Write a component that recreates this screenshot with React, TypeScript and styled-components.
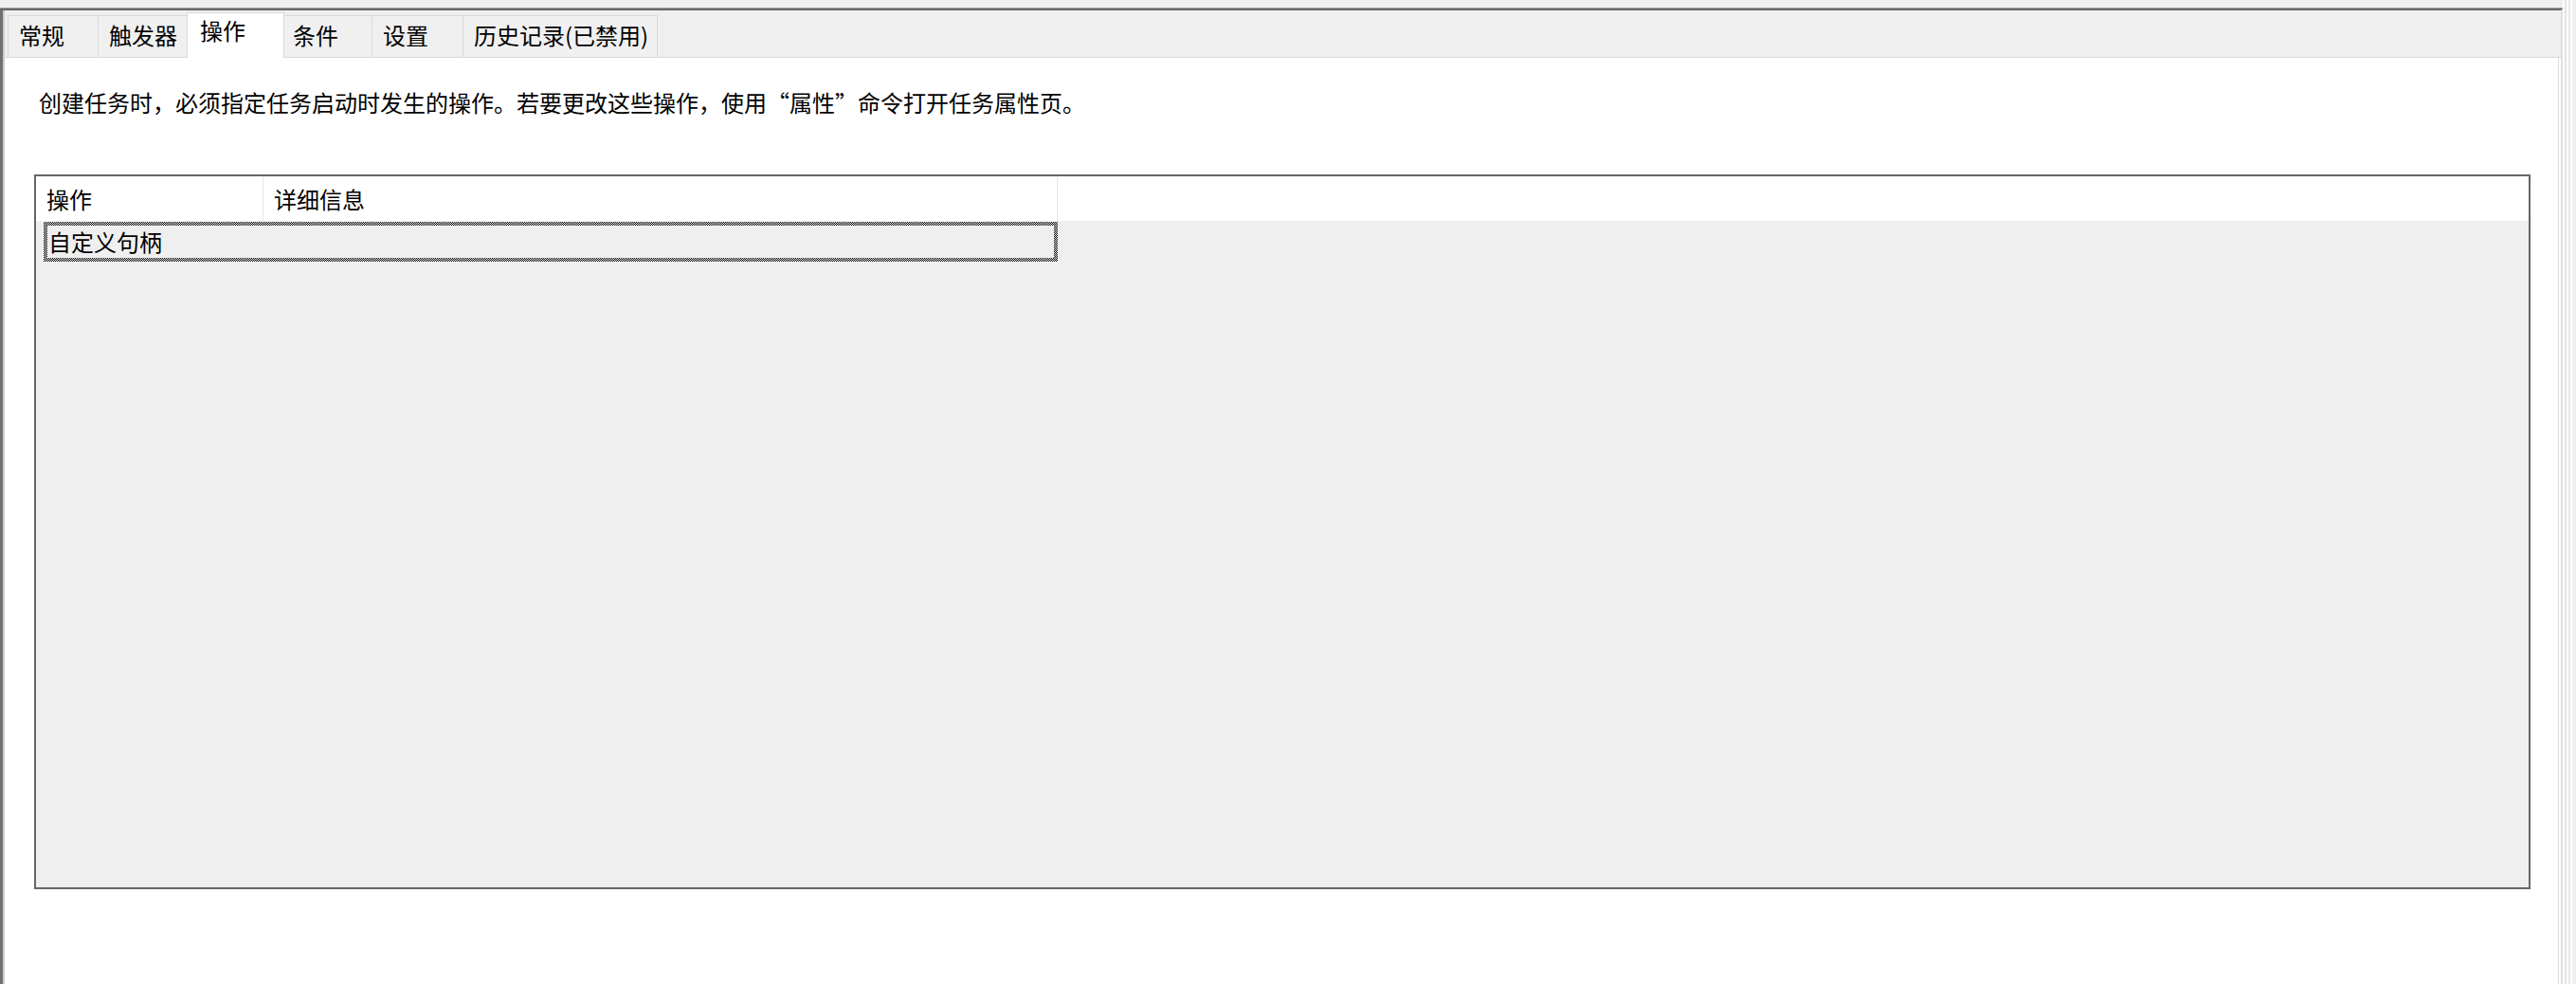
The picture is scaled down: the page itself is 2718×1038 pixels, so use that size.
import React from 'react';
import styled, { createGlobalStyle } from 'styled-components';

const tabs = [
    { label: '常规', width: 96 },
    { label: '触发器', width: 97 },
    { label: '操作', width: 99 },
    { label: '条件', width: 96 },
    { label: '设置', width: 97 },
    { label: '历史记录(已禁用)', width: 206 },
];

const activeTab = '操作';

const columns = [
    { label: '操作', width: 240 },
    { label: '详细信息', width: 838 },
];

export default function App() {
    return (
        <>
            <GlobalStyle />
            <Screen>
                <Window>
                    <Frame>
                        <TabStrip>
                            {tabs.map((t) => (
                                <Tab key={t.label} $width={t.width} $active={t.label === activeTab}>
                                    {t.label}
                                </Tab>
                            ))}
                        </TabStrip>

                        <Panel>
                            <Description>
                                创建任务时，必须指定任务启动时发生的操作。若要更改这些操作，使用“属性”命令打开任务属性页。
                            </Description>

                            <ActionTable>
                                <HeaderRow>
                                    {columns.map((c) => (
                                        <HeaderCell key={c.label} $width={c.width}>
                                            {c.label}
                                        </HeaderCell>
                                    ))}
                                </HeaderRow>
                                <FocusRow>
                                    <RowBody>自定义句柄</RowBody>
                                </FocusRow>
                            </ActionTable>
                        </Panel>
                    </Frame>
                </Window>
                <Stripes />
            </Screen>
        </>
    );
}

const GlobalStyle = createGlobalStyle`
    html, body {
        margin: 0;
        padding: 0;
        background: #efefef;
        font-family: "Noto Sans CJK SC", "Noto Sans", sans-serif;
        color: #000;
    }
`;

const Screen = styled.div`
    display: flex;
    width: 2718px;
    height: 1038px;
    overflow: hidden;
`;

const Window = styled.div`
    flex: 1;
    min-width: 0;
    display: flex;
    flex-direction: column;
    margin-top: 9px;
    border-top: 2px solid #696969;
    border-left: 3px solid #707070;
    border-right: 2px solid #e0e0e0;
    box-shadow: 0 -1px 0 #9a9a9a;
    background: #efefef;
`;

const Frame = styled.div`
    flex: 1;
    display: flex;
    flex-direction: column;
    border-left: 2px solid #cdcdcd;
`;

const TabStrip = styled.div`
    display: flex;
    align-items: flex-end;
    height: 49px;
    padding-left: 3px;
    flex-shrink: 0;
    position: relative;
    z-index: 1;
`;

const Tab = styled.div<{ $active: boolean; $width: number }>`
    box-sizing: border-box;
    flex-shrink: 0;
    position: relative;
    width: ${(p) => p.$width + (p.$active ? 4 : 0)}px;
    height: ${(p) => (p.$active ? 48 : 44)}px;
    margin: 0 ${(p) => (p.$active ? -3 : -1)}px ${(p) => (p.$active ? -1 : 0)}px ${(p) => (p.$active ? -2 : 0)}px;
    padding: ${(p) => (p.$active ? '6px 0 0 13px' : '8px 0 0 11px')};
    border: 1px solid #d9d9d9;
    border-bottom: none;
    background: ${(p) => (p.$active ? '#ffffff' : '#f0f0f0')};
    z-index: ${(p) => (p.$active ? 2 : 1)};
    font-size: 24px;
    line-height: 24px;
    white-space: nowrap;
`;

const Panel = styled.div`
    flex: 1;
    display: flex;
    flex-direction: column;
    background: #ffffff;
    border-top: 1px solid #d9d9d9;
    box-shadow: inset -2px 0 0 #ffffff, inset -3px 0 0 #d9d9d9;
`;

const Description = styled.div`
    margin: 35px 0 0 36px;
    font-size: 24px;
    line-height: 24px;
    white-space: nowrap;
`;

const ActionTable = styled.div`
    box-sizing: border-box;
    height: 754px;
    margin: 64px 32px 0 31px;
    border: 2px solid #666666;
    background: #efefef;
    display: flex;
    flex-direction: column;
`;

const HeaderRow = styled.div`
    display: flex;
    height: 47px;
    flex-shrink: 0;
    background: #ffffff;
`;

const HeaderCell = styled.div<{ $width: number }>`
    box-sizing: border-box;
    width: ${(p) => p.$width}px;
    display: flex;
    align-items: center;
    padding-left: 11px;
    border-right: 1px solid #e5e5e5;
    font-size: 24px;
    line-height: 24px;
`;

const FocusRow = styled.div`
    box-sizing: border-box;
    width: 1070px;
    height: 42px;
    margin: 1px 0 0 8px;
    padding: 4px;
    background: conic-gradient(#000 25%, #f4f4f4 0 50%, #000 0 75%, #f4f4f4 0) 0 0 / 2px 2px;
`;

const RowBody = styled.div`
    height: 100%;
    display: flex;
    align-items: center;
    padding-left: 1px;
    background: #efefef;
    font-size: 24px;
    line-height: 24px;
`;

const Stripes = styled.div`
    width: 14px;
    flex-shrink: 0;
    background: linear-gradient(
        to right,
        #ffffff 0 2px,
        #e3e3e3 2px 4px,
        #ffffff 4px 6px,
        #e6e6e6 6px 8px,
        #ffffff 8px 10px,
        #efefef 10px 14px
    );
`;
